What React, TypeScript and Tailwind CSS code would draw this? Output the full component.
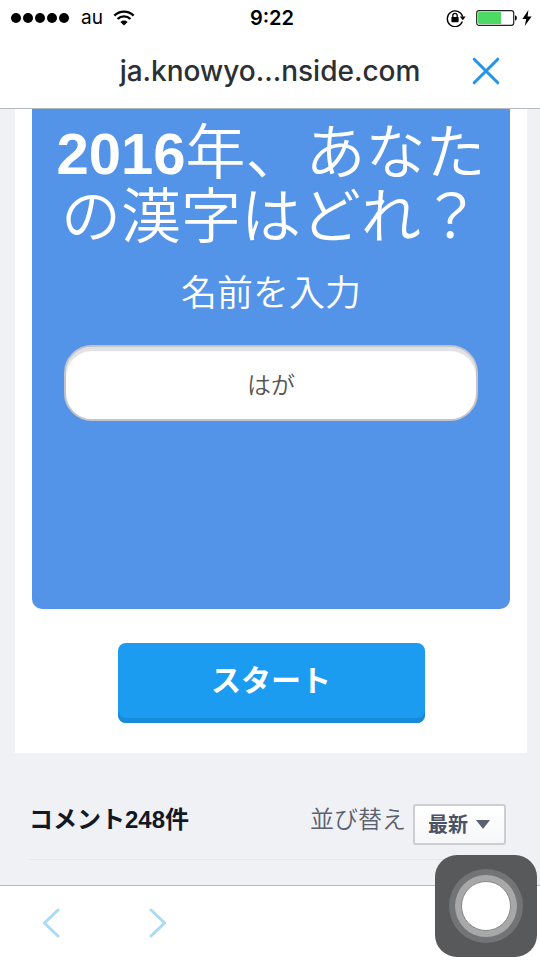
import { useState } from "react";

const StatusBar = () => {
  return (
    <div className="grid h-9 grid-cols-3 items-center font-['Inter',sans-serif] text-black">
      <div className="flex items-center pl-[11px]">
        <div className="flex gap-[2px]">
          {[0, 1, 2, 3, 4].map((dot) => (
            <span key={dot} className="h-[10px] w-[10px] rounded-full bg-black" />
          ))}
        </div>
        <span className="ml-3 text-[19px] leading-6">au</span>
        <svg viewBox="0 0 22 16" className="ml-[10px] h-4 w-[22px]" fill="none">
          <path d="M1.4 5.6a13.6 13.6 0 0 1 19.2 0" stroke="black" strokeWidth="2.4" />
          <path d="M4.6 9a9 9 0 0 1 12.8 0" stroke="black" strokeWidth="2.4" />
          <path d="M7.4 11.9a5.2 5.2 0 0 1 7.2 0L11 15.6z" fill="black" />
        </svg>
      </div>
      <p className="pl-1 text-center text-[20px] font-semibold leading-6">9:22</p>
      <div className="flex items-center justify-end pr-2">
        <svg viewBox="0 0 20 18" className="h-[18px] w-5" fill="none">
          <path d="M16.4 12.6A7.8 7.8 0 1 1 16.6 7.6" stroke="black" strokeWidth="1.3" />
          <path d="M13.8 7.6h5.8l-2.8 3.6z" fill="black" />
          <rect x="5.4" y="8" width="7.2" height="5.2" rx="0.6" fill="black" />
          <path d="M6.8 8V6.6a2.2 2.2 0 0 1 4.4 0V8" stroke="black" strokeWidth="1.3" />
        </svg>
        <svg viewBox="0 0 42 18" className="ml-[10px] h-[18px] w-[42px]" fill="none">
          <rect x="0.7" y="1.7" width="37" height="14.6" rx="2.4" stroke="#222" strokeWidth="1.2" />
          <path d="M3.4 3H25v12H3.4A1.4 1.4 0 0 1 2 13.6V4.4A1.4 1.4 0 0 1 3.4 3z" fill="#4cd964" />
          <path d="M39 6.2a3 3 0 0 1 0 5.6z" fill="black" />
        </svg>
        <svg viewBox="0 0 10 16" className="ml-1 h-4 w-[10px]">
          <path d="M6.4 0 0.4 9h3.8L2.8 16 9.6 6.4H5.6z" fill="black" />
        </svg>
      </div>
    </div>
  );
};

const BrowserHeader = () => {
  return (
    <header className="border-b border-[#b4bac2] bg-white">
      <StatusBar />
      <div className="grid h-[72px] grid-cols-[80px_1fr_80px] items-center pb-[2px]">
        <h1 className="col-start-2 text-center font-['Inter','Noto_Sans_CJK_JP',sans-serif] text-[28px] font-medium leading-8 text-[#2c2f33]">
          ja.knowyo...nside.com
        </h1>
        <button type="button" aria-label="閉じる" className="ml-3 flex h-7 w-7 items-center justify-center">
          <svg viewBox="0 0 28 28" className="h-7 w-7" fill="none" stroke="#2196e8" strokeWidth="3" strokeLinecap="round">
            <path d="M2.2 2.2 25.8 25.8M25.8 2.2 2.2 25.8" />
          </svg>
        </button>
      </div>
    </header>
  );
};

const QuizCard = () => {
  const [name, setName] = useState("はが");

  return (
    <section className="bg-white px-[17px] pb-[30px]">
      <div className="min-h-[500px] rounded-b-[10px] bg-[#5494e8] px-8 pt-[13px] text-center text-white">
        <h2 className="-mx-4 text-[60px] font-[350] leading-[64px]">
          <span className="text-[58px] font-bold">2016</span>年、あなたの漢字はどれ？
        </h2>
        <label htmlFor="name" className="mt-6 block text-[36px] font-[350] leading-10">
          名前を入力
        </label>
        <input
          id="name"
          type="text"
          value={name}
          onChange={(e) => setName(e.target.value)}
          className="mt-[31px] block h-[76px] w-full rounded-[28px] border-2 border-[#c3c5ca] bg-white text-center text-[24px] font-[350] text-[#555] shadow-[inset_0_4px_1px_#e2e2e6] outline-none"
        />
      </div>
      <button
        type="button"
        className="mx-auto mt-[34px] block h-20 w-[307px] rounded-lg bg-[#1c9cf1] pb-1 text-[30px] font-bold leading-9 text-white shadow-[inset_0_-5px_1px_#178ada]"
      >
        スタート
      </button>
    </section>
  );
};

const Comments = () => {
  return (
    <section className="mx-[14px] mt-[51px] flex items-start border-b border-[#e5e7eb] pb-[14px]">
      <h2 className="flex-1 text-[24px] font-bold leading-8 text-[#141823]">コメント248件</h2>
      <label htmlFor="sort" className="text-[24px] font-[350] leading-8 text-[#5a6070]">
        並び替え
      </label>
      <div className="mx-[7px] grid h-[41px] w-[93px] items-center rounded-[3px] border-2 border-[#cdced2] bg-linear-to-b from-white to-[#f6f7f9]">
        <select
          id="sort"
          className="col-start-1 row-start-1 h-full w-full appearance-none bg-transparent pl-[13px] text-[20px] font-bold text-[#4b5266] outline-none"
        >
          <option>最新</option>
        </select>
        <svg viewBox="0 0 14 9" className="pointer-events-none col-start-1 row-start-1 mr-[14px] h-[9px] w-[14px] justify-self-end">
          <path d="M0 0h14L7 9z" fill="#5a6070" />
        </svg>
      </div>
    </section>
  );
};

const BottomNav = () => {
  return (
    <nav className="flex h-[75px] items-center gap-[88px] border-t border-[#b4bac2] bg-white pl-[42px]">
      <button type="button" aria-label="戻る" className="flex h-8 w-[18px] items-center">
        <svg viewBox="0 0 18 30" className="h-[30px] w-[18px]" fill="none" stroke="#a9daf6" strokeWidth="3" strokeLinecap="round" strokeLinejoin="round">
          <path d="M16 2 2.4 15 16 28" />
        </svg>
      </button>
      <button type="button" aria-label="進む" className="flex h-8 w-[18px] items-center">
        <svg viewBox="0 0 18 30" className="h-[30px] w-[18px]" fill="none" stroke="#a9daf6" strokeWidth="3" strokeLinecap="round" strokeLinejoin="round">
          <path d="M3 2 16.6 15 3 28" />
        </svg>
      </button>
    </nav>
  );
};

const AssistiveTouch = () => {
  return (
    <button
      type="button"
      aria-label="AssistiveTouch"
      className="fixed bottom-[3px] right-[3px] flex h-[102px] w-[102px] items-center justify-center rounded-[22px] bg-[#58595b]"
    >
      <svg viewBox="0 0 76 76" className="h-[76px] w-[76px]">
        <circle cx="38" cy="38" r="37" fill="#737476" />
        <circle cx="38" cy="38" r="31" fill="#a8a8a9" />
        <circle cx="38" cy="38" r="24.5" fill="white" stroke="#858687" strokeWidth="1" />
      </svg>
    </button>
  );
};

const App = () => {
  return (
    <div className="flex min-h-screen flex-col bg-[#eff1f5] font-['Liberation_Sans','Noto_Sans_CJK_JP',sans-serif]">
      <BrowserHeader />
      <main className="flex-1 pl-[15px] pr-[13px]">
        <QuizCard />
        <Comments />
      </main>
      <BottomNav />
      <AssistiveTouch />
    </div>
  );
};

export default App;
